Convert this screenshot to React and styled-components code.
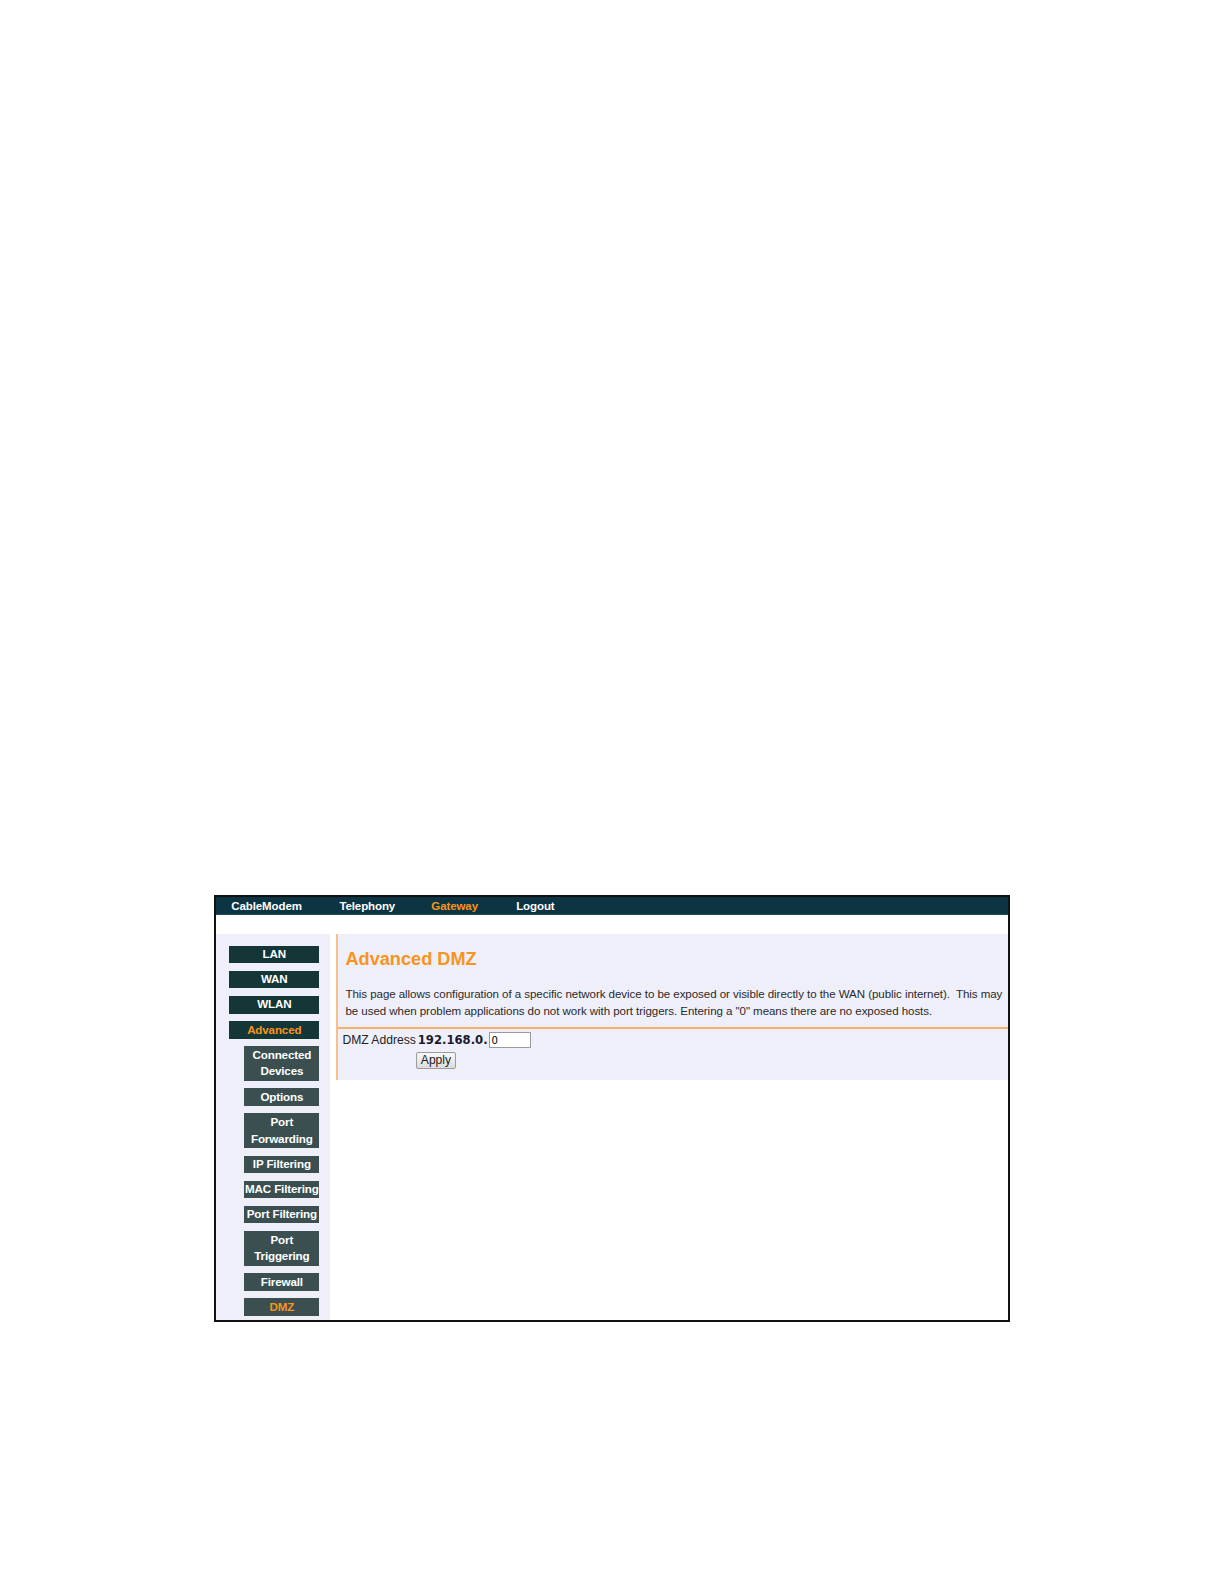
import React from "react";
import styled, { createGlobalStyle } from "styled-components";

const GlobalStyle = createGlobalStyle`
  html, body {
    margin: 0;
    padding: 0;
    background: #ffffff;
  }
  body {
    font-family: "Liberation Sans", Arial, sans-serif;
  }
`;

const Page = styled.div`
  zoom: 1.0103;
  padding: 886px 0 0 212px;
`;

const Frame = styled.div`
  width: 788px;
  height: 423px;
  box-sizing: border-box;
  border: 2px solid #111;
  overflow: hidden;
  display: flex;
  flex-direction: column;
  background: #fff;
`;

const NavBar = styled.div`
  height: 18px;
  flex: none;
  background: #0c3443;
  display: flex;
  align-items: center;
  padding-left: 15px;
  border-bottom: 1px solid #1e4c5a;
  box-sizing: border-box;
`;

const NavItem = styled.span`
  font-size: 11.4px;
  font-weight: bold;
  letter-spacing: -0.1px;
  color: ${p => (p.$active ? "#f7941d" : "#ffffff")};
  width: ${p => p.$w}px;
`;

const Spacer = styled.div`
  height: 19px;
  flex: none;
`;

const Body = styled.div`
  flex: 1;
  display: flex;
  gap: 6px;
  min-height: 0;
`;

const Sidebar = styled.div`
  width: 113px;
  flex: none;
  background: #efeffa;
  padding: 11px 11px 0 0;
  box-sizing: border-box;
  display: flex;
  flex-direction: column;
  align-items: flex-end;
  gap: 7.4px;
`;

const MenuButton = styled.div`
  flex: none;
  width: ${p => (p.$sub ? 74 : 89)}px;
  height: ${p => (p.$lines === 2 ? 34.3 : 17.5)}px;
  background: ${p => (p.$sub ? "#3c4f50" : "#143637")};
  color: ${p => (p.$active ? "#f7941d" : "#ffffff")};
  font-size: 11.5px;
  font-weight: bold;
  line-height: 16.5px;
  text-align: center;
  display: flex;
  align-items: center;
  justify-content: center;
  letter-spacing: -0.15px;
  white-space: nowrap;
  overflow: hidden;
`;

const Main = styled.div`
  flex: 1;
  min-width: 0;
`;

const Panel = styled.div`
  height: 144px;
  background: #efeffa;
  border-left: 2px solid #f6c08c;
  box-sizing: border-box;
  overflow: hidden;
`;

const Header = styled.div`
  padding: 12px 0 0 7px;
  height: 94px;
  box-sizing: border-box;
  border-bottom: 2px solid #f3b16a;
`;

const Title = styled.h1`
  margin: 0;
  font-size: 18px;
  font-weight: bold;
  color: #f7941d;
  line-height: 24px;
`;

const Description = styled.p`
  margin: 15px 0 0;
  font-size: 11.45px;
  line-height: 17px;
  color: #2a2a2a;
  white-space: nowrap;
  letter-spacing: -0.06px;
`;

const Form = styled.div`
  display: grid;
  grid-template-columns: auto auto;
  justify-content: start;
  row-gap: 2px;
  padding: 1px 0 0 4px;
`;

const Label = styled.span`
  font-size: 12px;
  color: #222;
  line-height: 17px;
  padding-top: 2px;
`;

const Field = styled.div`
  display: flex;
  align-items: center;
  padding-left: 2px;
`;

const Prefix = styled.span`
  font-family: "DejaVu Sans", Verdana, sans-serif;
  font-size: 11.5px;
  font-weight: bold;
  color: #1a1a2a;
`;

const Input = styled.input`
  width: 42px;
  height: 16px;
  box-sizing: border-box;
  border: 1px solid #9a9a9a;
  background: #fff;
  font-family: "DejaVu Sans", sans-serif;
  font-size: 10px;
  padding: 0 2px;
  margin: 0 0 0 1px;
  outline: none;
`;

const ApplyButton = styled.button`
  grid-column: 2;
  justify-self: start;
  width: 40px;
  height: 17px;
  padding: 0;
  font-family: "Liberation Sans", Arial, sans-serif;
  font-size: 12px;
  color: #222;
  border: 1px solid #9c9c9c;
  border-radius: 2px;
  background: linear-gradient(#f8f8f8, #dcdcdc);
`;

const nav = [
  { label: "CableModem", w: 107 },
  { label: "Telephony", w: 91 },
  { label: "Gateway", w: 84, active: true },
  { label: "Logout", w: 60 },
];

const menu = [
  { label: "LAN" },
  { label: "WAN" },
  { label: "WLAN" },
  { label: "Advanced", active: true },
  { label: ["Connected", "Devices"], sub: true },
  { label: "Options", sub: true },
  { label: ["Port", "Forwarding"], sub: true },
  { label: "IP Filtering", sub: true },
  { label: "MAC Filtering", sub: true },
  { label: "Port Filtering", sub: true },
  { label: ["Port", "Triggering"], sub: true },
  { label: "Firewall", sub: true },
  { label: "DMZ", sub: true, active: true },
];

export default function App() {
  return (
    <>
      <GlobalStyle />
      <Page>
        <Frame>
          <NavBar>
            {nav.map(n => (
              <NavItem key={n.label} $w={n.w} $active={n.active}>
                {n.label}
              </NavItem>
            ))}
          </NavBar>
          <Spacer />
          <Body>
            <Sidebar>
              {menu.map((m, i) => {
                const two = Array.isArray(m.label);
                return (
                  <MenuButton key={i} $sub={m.sub} $active={m.active} $lines={two ? 2 : 1}>
                    {two ? (
                      <span>
                        {m.label[0]}
                        <br />
                        {m.label[1]}
                      </span>
                    ) : (
                      m.label
                    )}
                  </MenuButton>
                );
              })}
            </Sidebar>
            <Main>
              <Panel>
                <Header>
                  <Title>Advanced DMZ</Title>
                  <Description>
                    This page allows configuration of a specific network device to be exposed or visible directly to the WAN (public internet).&nbsp; This may
                    <br />
                    be used when problem applications do not work with port triggers. Entering a "0" means there are no exposed hosts.
                  </Description>
                </Header>
                <Form>
                  <Label>DMZ Address</Label>
                  <Field>
                    <Prefix>192.168.0.</Prefix>
                    <Input defaultValue="0" />
                  </Field>
                  <ApplyButton>Apply</ApplyButton>
                </Form>
              </Panel>
            </Main>
          </Body>
        </Frame>
      </Page>
    </>
  );
}
